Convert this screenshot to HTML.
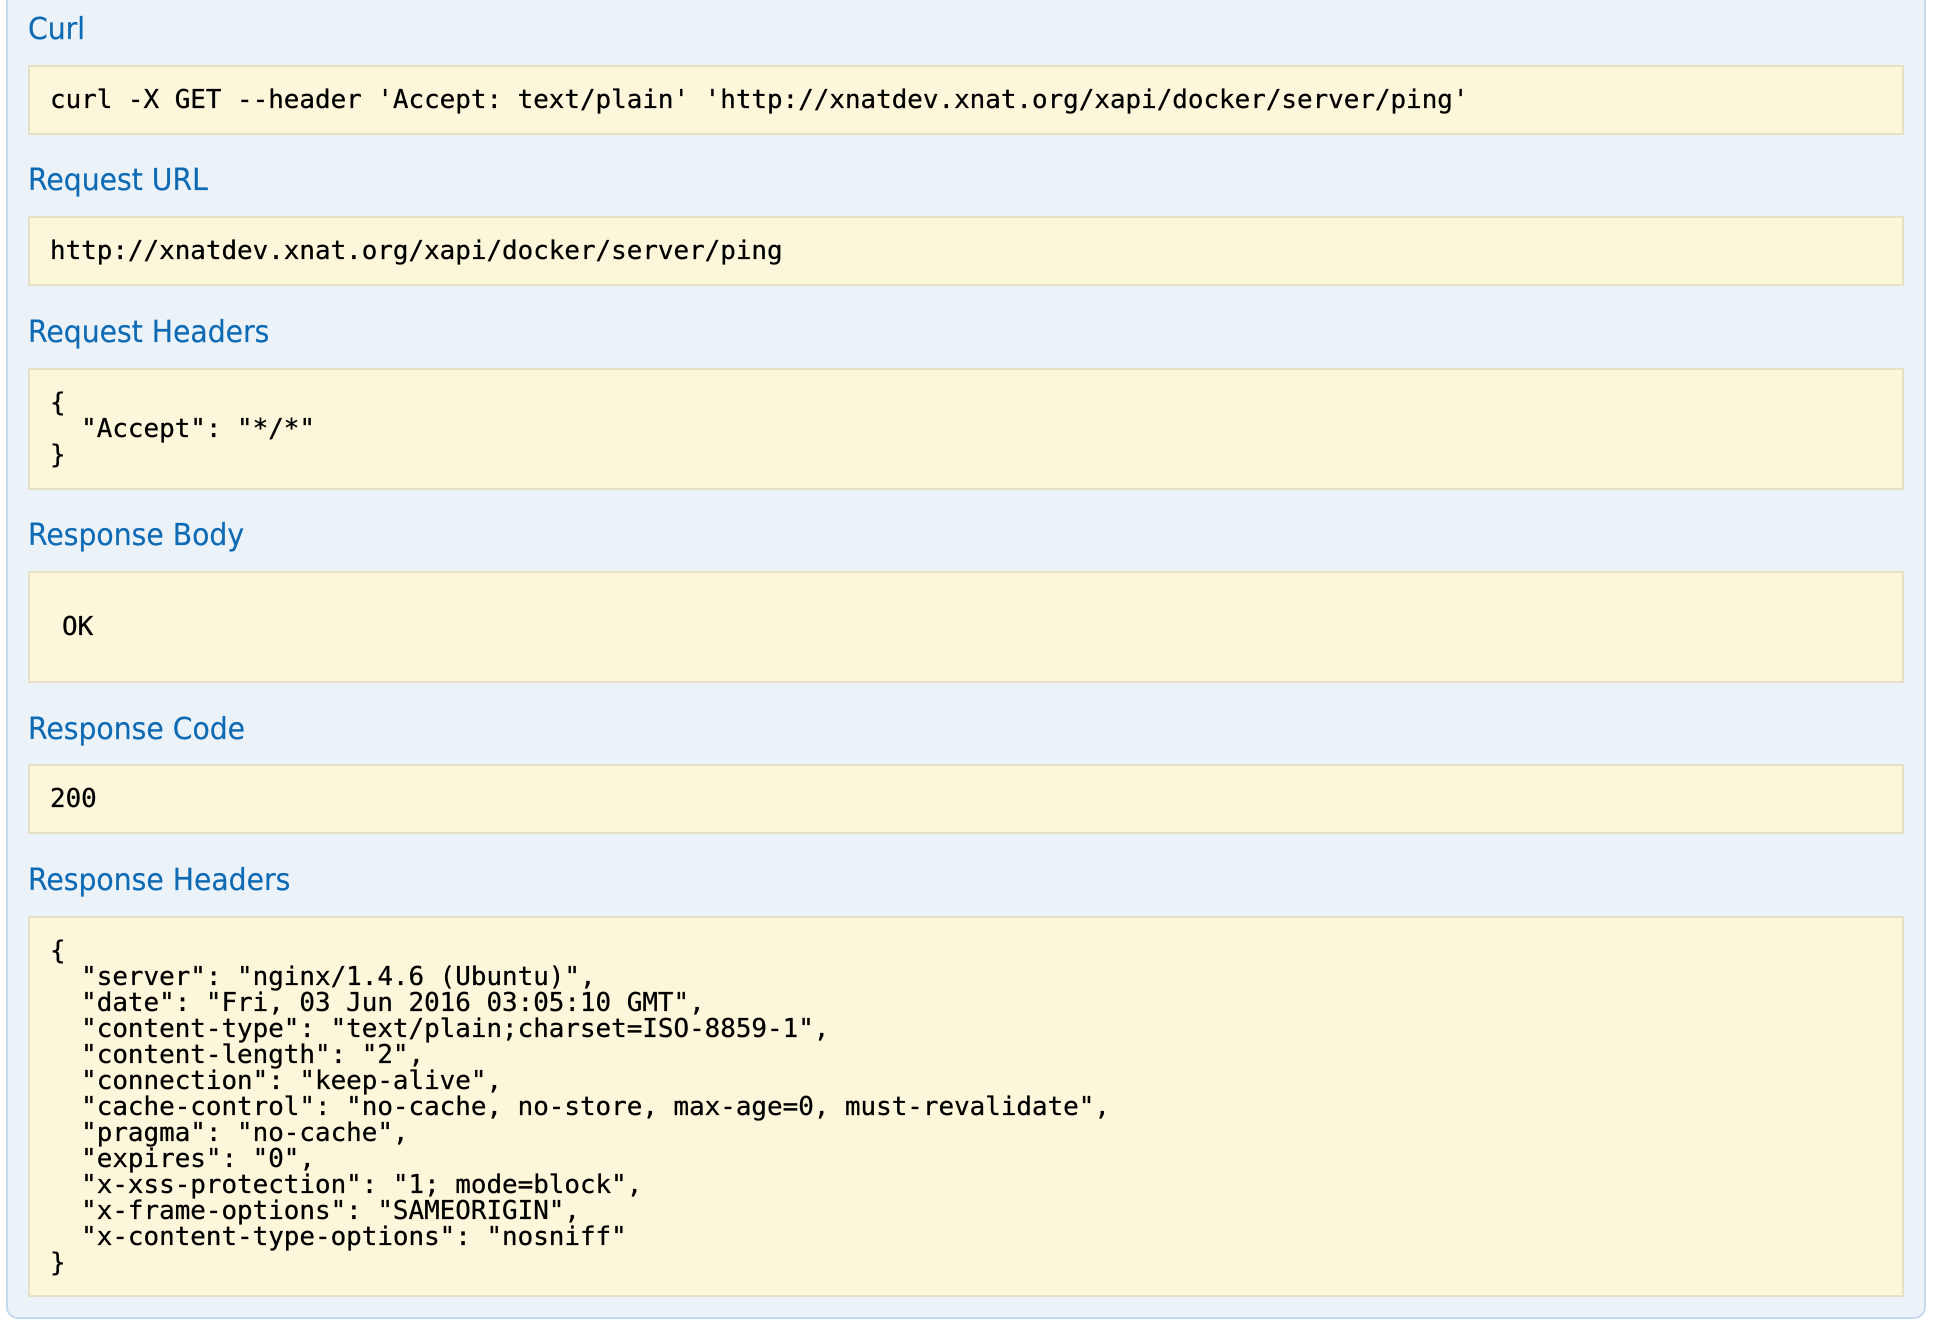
<!DOCTYPE html>
<html><head><meta charset="utf-8"><style>
html,body{margin:0;padding:0;background:#fff;width:1936px;height:1328px;overflow:hidden}
#p{position:absolute;left:6px;top:-10px;width:1916px;height:1325px;background:#ebf3f9;border:2px solid #c3d9ec;border-radius:0 0 12px 12px}
h4{position:absolute;left:28px;margin:0;font:400 30px/36px "DejaVu Sans",sans-serif;color:#0f6ab4;white-space:pre;transform:scaleX(.942);transform-origin:0 0;-webkit-text-stroke:.2px #0f6ab4}
.b{position:absolute;left:28px;width:1872px;background:#fcf6db;border:2px solid #e6e0c4}
pre{position:absolute;margin:0;left:50px;font:400 25.9px/26px "DejaVu Sans Mono",monospace;color:#000;white-space:pre;-webkit-text-stroke:.3px #000}
</style></head><body>
<div id="p"></div>
<h4 style="top:12px">Curl</h4>
<div class="b" style="top:65px;height:66px"></div>
<pre style="top:87px">curl -X GET --header 'Accept: text/plain' 'http://xnatdev.xnat.org/xapi/docker/server/ping'</pre>
<h4 style="top:163px">Request URL</h4>
<div class="b" style="top:216px;height:66px"></div>
<pre style="top:238px">http://xnatdev.xnat.org/xapi/docker/server/ping</pre>
<h4 style="top:315px">Request Headers</h4>
<div class="b" style="top:368px;height:118px"></div>
<pre style="top:390px">{
  "Accept": "*/*"
}</pre>
<h4 style="top:518px">Response Body</h4>
<div class="b" style="top:571px;height:108px"></div>
<pre style="top:614px;left:62px">OK</pre>
<h4 style="top:712px">Response Code</h4>
<div class="b" style="top:764px;height:66px"></div>
<pre style="top:786px">200</pre>
<h4 style="top:863px">Response Headers</h4>
<div class="b" style="top:916px;height:377px"></div>
<pre style="top:938px">{
  "server": "nginx/1.4.6 (Ubuntu)",
  "date": "Fri, 03 Jun 2016 03:05:10 GMT",
  "content-type": "text/plain;charset=ISO-8859-1",
  "content-length": "2",
  "connection": "keep-alive",
  "cache-control": "no-cache, no-store, max-age=0, must-revalidate",
  "pragma": "no-cache",
  "expires": "0",
  "x-xss-protection": "1; mode=block",
  "x-frame-options": "SAMEORIGIN",
  "x-content-type-options": "nosniff"
}</pre>
</body></html>
